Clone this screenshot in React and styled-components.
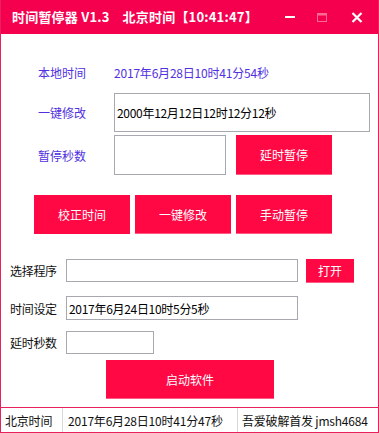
import React from "react";
import styled, { createGlobalStyle } from "styled-components";

const Global = createGlobalStyle`
  html, body {
    margin: 0;
    padding: 0;
    background: #ffffff;
  }
  * {
    box-sizing: border-box;
  }
`;

const Window = styled.div`
  width: 379px;
  height: 433px;
  display: flex;
  flex-direction: column;
  background: #ffffff;
  border: 1px solid #e8215c;
  border-top: none;
  font-family: "Noto Sans CJK SC", "Noto Sans", sans-serif;
  font-size: 12px;
  overflow: hidden;
`;

const TitleBar = styled.div`
  height: 34px;
  margin: 0 -1px;
  display: flex;
  align-items: center;
  background: #f5004f;
  color: #ffffff;
  padding-left: 12px;
  padding-right: 3px;
`;

const Title = styled.div`
  flex: 1;
  display: flex;
  gap: 13px;
  font-size: 13px;
  font-weight: 700;
  letter-spacing: 0.2px;
  line-height: 1;
  margin-top: -1px;
`;

const Controls = styled.div`
  display: flex;
  align-items: center;
  height: 100%;
`;

const Ctrl = styled.div`
  width: ${({ $w }) => $w}px;
  height: 100%;
  display: flex;
  align-items: center;
  justify-content: center;
`;

const Section = styled.div`
  display: flex;
  flex-direction: column;
  padding-left: ${({ $left }) => $left}px;
`;

const Row = styled.div`
  display: flex;
  align-items: center;
  height: ${({ $h }) => $h}px;
  margin-top: ${({ $mt }) => $mt || 0}px;
`;

const Label = styled.div`
  width: ${({ $w }) => $w}px;
  flex-shrink: 0;
  color: ${({ $blue }) => ($blue ? "#5030e0" : "#111111")};
  font-size: 12px;
  letter-spacing: ${({ $blue }) => ($blue ? "0" : "-0.3px")};
`;

const Value = styled.div`
  color: #5030e0;
  font-size: 12px;
  letter-spacing: -0.2px;
`;

const Field = styled.div`
  width: ${({ $w }) => $w}px;
  height: 100%;
  border: 1px solid #a8a8b0;
  background: #ffffff;
  display: flex;
  align-items: center;
  padding-left: 2px;
  color: #000000;
  font-size: 12px;
  letter-spacing: -0.3px;
  white-space: nowrap;
`;

const Button = styled.div`
  width: ${({ $w }) => $w}px;
  height: ${({ $h }) => $h}px;
  margin-left: ${({ $ml }) => $ml || 0}px;
  background: #ff0844;
  color: #ffffff;
  font-size: 12px;
  font-weight: 400;
  display: flex;
  align-items: center;
  justify-content: center;
  flex-shrink: 0;
  border-bottom: 1px solid ${({ $edge }) => ($edge ? "#ff5a84" : "#ff0844")};
`;

const ButtonRow = styled.div`
  display: flex;
  gap: 5px;
  margin-top: 20px;
  padding-left: 33px;
`;

const StatusBar = styled.div`
  margin-top: auto;
  height: 25px;
  display: flex;
  border-top: 1px solid #e8215c;
  color: #111111;
  font-size: 12px;
`;

const Cell = styled.div`
  width: ${({ $w }) => $w}px;
  flex-shrink: 0;
  display: flex;
  align-items: center;
  padding-left: ${({ $pl }) => $pl}px;
  border-right: ${({ $last }) => ($last ? "none" : "1px solid #d8d8d8")};
  white-space: nowrap;
  letter-spacing: -0.2px;
`;

export default function App() {
  return (
    <>
      <Global />
      <Window>
        <TitleBar>
          <Title>
            <span>时间暂停器 V1.3</span>
            <span>北京时间【10:41:47】</span>
          </Title>
          <Controls>
            <Ctrl $w={32}>
              <svg width="12" height="4" viewBox="0 0 12 4">
                <rect x="1" y="1" width="10" height="2" fill="#ffffff" />
              </svg>
            </Ctrl>
            <Ctrl $w={32}>
              <svg width="10" height="9" viewBox="0 0 10 9">
                <rect x="0.5" y="0.5" width="9" height="8" fill="none" stroke="#ff6a93" />
                <rect x="0.5" y="0.5" width="9" height="2" fill="#ff6a93" />
              </svg>
            </Ctrl>
            <Ctrl $w={38}>
              <svg width="12" height="11" viewBox="0 0 12 11">
                <path d="M1.5 1 L10.5 10 M10.5 1 L1.5 10" stroke="#ffffff" strokeWidth="2.2" />
              </svg>
            </Ctrl>
          </Controls>
        </TitleBar>

        <Section $left={37}>
          <Row $h={24} $mt={26}>
            <Label $w={76} $blue>本地时间</Label>
            <Value>2017年6月28日10时41分54秒</Value>
          </Row>
          <Row $h={39} $mt={9}>
            <Label $w={76} $blue>一键修改</Label>
            <Field $w={256}>2000年12月12日12时12分12秒</Field>
          </Row>
          <Row $h={40} $mt={3}>
            <Label $w={76} $blue>暂停秒数</Label>
            <Field $w={112} />
            <Button $w={96} $h={40} $ml={10} $edge>延时暂停</Button>
          </Row>
        </Section>

        <ButtonRow>
          <Button $w={96} $h={39}>校正时间</Button>
          <Button $w={96} $h={39} $edge>一键修改</Button>
          <Button $w={96} $h={39} $edge>手动暂停</Button>
        </ButtonRow>

        <Section $left={9}>
          <Row $h={23} $mt={25}>
            <Label $w={56}>选择程序</Label>
            <Field $w={232} />
            <Button $w={48} $h={24} $ml={8} $edge>打开</Button>
          </Row>
          <Row $h={24} $mt={14}>
            <Label $w={56}>时间设定</Label>
            <Field $w={232}>2017年6月24日10时5分5秒</Field>
          </Row>
          <Row $h={23} $mt={11}>
            <Label $w={56}>延时秒数</Label>
            <Field $w={88} />
          </Row>
          <Row $h={39} $mt={6}>
            <Button $w={168} $h={39} $ml={96} $edge>启动软件</Button>
          </Row>
        </Section>

        <StatusBar>
          <Cell $w={62} $pl={4}>北京时间</Cell>
          <Cell $w={175} $pl={5}>2017年6月28日10时41分47秒</Cell>
          <Cell $w={140} $pl={4} $last>吾爱破解首发 jmsh4684</Cell>
        </StatusBar>
      </Window>
    </>
  );
}
